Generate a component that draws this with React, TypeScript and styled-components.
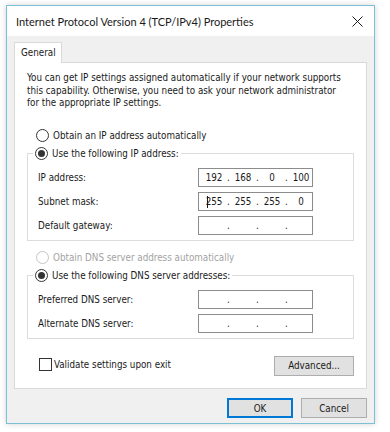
import React from "react";
import styled, { createGlobalStyle } from "styled-components";

const GlobalStyle = createGlobalStyle`
  html, body {
    margin: 0;
    padding: 0;
    background: #ffffff;
  }
  body {
    font-family: "DejaVu Sans Condensed", "DejaVu Sans", sans-serif;
    font-size: 9.75px;
    color: #1a1a1a;
  }
`;

const Page = styled.div`
  width: 390px;
  height: 432px;
  padding: 5px 0 0 6px;
  box-sizing: border-box;
`;

const Window = styled.div`
  width: 369px;
  height: 419px;
  box-sizing: border-box;
  border: 1px solid #7cc0d4;
  box-shadow: 0 0 6px rgba(0, 0, 0, 0.18);
  background: #f0f0f0;
  display: flex;
  flex-direction: column;
`;

const TitleBar = styled.div`
  height: 30px;
  background: #ffffff;
  display: flex;
  align-items: center;
  justify-content: space-between;
  padding: 0 8px 0 9px;
`;

const Title = styled.span`
  font-family: Lato, "Open Sans", sans-serif;
  font-size: 11px;
  color: #1a1a1a;
`;

const CloseButton = styled.button`
  border: none;
  background: transparent;
  padding: 0;
  width: 14px;
  height: 14px;
  display: flex;
  align-items: center;
  justify-content: center;
  margin-right: 2px;
`;

const Body = styled.div`
  flex: 1;
  display: flex;
  flex-direction: column;
  padding: 6px 7px 0 7px;
`;

const TabStrip = styled.div`
  display: flex;
  height: 20px;
`;

const Tab = styled.div`
  width: 48px;
  box-sizing: border-box;
  border: 1px solid #d9d9d9;
  border-bottom: none;
  background: #ffffff;
  padding: 4px 0 0 6px;
  margin-bottom: -1px;
  position: relative;
  z-index: 1;
`;

const Panel = styled.div`
  height: 327px;
  box-sizing: border-box;
  background: #ffffff;
  border: 1px solid #d9d9d9;
  padding: 9px 11px 0 12px;
  display: flex;
  flex-direction: column;
`;

const Intro = styled.p`
  margin: 0 0 17px 0;
  line-height: 12.5px;
`;

const Indent = styled.div<{ $top?: number }>`
  padding-left: 9px;
  margin-top: ${(p) => p.$top ?? 0}px;
`;

const RadioRow = styled.label<{ $disabled?: boolean }>`
  display: flex;
  align-items: center;
  gap: 4px;
  height: 18px;
  color: ${(p) => (p.$disabled ? "#a3a3a3" : "#1a1a1a")};
`;

const RadioCircle = styled.span<{ $checked?: boolean; $disabled?: boolean }>`
  width: 11px;
  height: 11px;
  border-radius: 50%;
  border: 1px solid ${(p) => (p.$disabled ? "#c4c4c4" : "#333333")};
  background: #ffffff;
  display: flex;
  align-items: center;
  justify-content: center;
  &::after {
    content: "";
    width: 7px;
    height: 7px;
    border-radius: 50%;
    background: ${(p) => (p.$checked ? "#333333" : "transparent")};
  }
`;

const Group = styled.fieldset`
  margin: 0 1px 0 0;
  border: 1px solid #dcdcdc;
  padding: 5px 0 5px 10px;
  display: flex;
  flex-direction: column;
  gap: 5px;
  min-width: 0;
`;

const Legend = styled.legend`
  padding: 0 2px 0 2px;
  margin-left: -5px;
`;

const FieldRow = styled.div`
  display: grid;
  grid-template-columns: 160px 115px;
  align-items: center;
`;

const AddressBox = styled.div`
  height: 19px;
  box-sizing: border-box;
  border: 1px solid #8c8c8c;
  display: grid;
  grid-template-columns: 26px 3px 26px 3px 26px 3px 26px;
  align-items: center;
  padding-left: 2px;
  position: relative;
`;

const Octet = styled.span`
  text-align: center;
`;

const Dot = styled.span`
  text-align: center;
`;

const Caret = styled.span`
  position: absolute;
  left: 8px;
  top: 3px;
  width: 1px;
  height: 12px;
  background: #1a1a1a;
`;

const BottomRow = styled.div`
  display: flex;
  align-items: center;
  justify-content: space-between;
  margin-top: 17px;
  padding: 0 1px 0 12px;
`;

const CheckRow = styled.label`
  display: flex;
  align-items: center;
  gap: 2px;
  margin-top: -3px;
`;

const CheckBox = styled.span`
  width: 11px;
  height: 11px;
  border: 1px solid #333333;
  background: #ffffff;
`;

const Button = styled.button<{ $default?: boolean; $width: number }>`
  font-family: inherit;
  font-size: 9.75px;
  color: #1a1a1a;
  background: #e1e1e1;
  border: 1px solid ${(p) => (p.$default ? "#0078d7" : "#adadad")};
  box-shadow: ${(p) => (p.$default ? "inset 0 0 0 1px #0078d7" : "none")};
  width: ${(p) => p.$width}px;
  height: 20px;
  padding: 0;
  box-sizing: border-box;
`;

const Footer = styled.div`
  display: flex;
  justify-content: flex-end;
  gap: 8px;
  padding-top: 9px;
`;

function Address({ value, caret }: { value?: string[]; caret?: boolean }) {
  const parts = value ?? ["", "", "", ""];
  return (
    <AddressBox>
      {caret && <Caret />}
      {parts.map((p, i) => (
        <React.Fragment key={i}>
          <Octet>{p}</Octet>
          {i < 3 && <Dot>.</Dot>}
        </React.Fragment>
      ))}
    </AddressBox>
  );
}

function Radio({ label, checked, disabled }: { label: string; checked?: boolean; disabled?: boolean }) {
  return (
    <RadioRow $disabled={disabled}>
      <RadioCircle $checked={checked} $disabled={disabled} />
      {label}
    </RadioRow>
  );
}

export default function App() {
  return (
    <>
      <GlobalStyle />
      <Page>
        <Window>
          <TitleBar>
            <Title>Internet Protocol Version 4 (TCP/IPv4) Properties</Title>
            <CloseButton aria-label="Close">
              <svg width="11" height="11" viewBox="0 0 11 11">
                <path d="M0.5 0.5 L10.5 10.5 M10.5 0.5 L0.5 10.5" stroke="#1a1a1a" strokeWidth="1" />
              </svg>
            </CloseButton>
          </TitleBar>
          <Body>
            <TabStrip>
              <Tab>General</Tab>
            </TabStrip>
            <Panel>
              <Intro>
                You can get IP settings assigned automatically if your network supports
                <br />
                this capability. Otherwise, you need to ask your network administrator
                <br />
                for the appropriate IP settings.
              </Intro>
              <Indent>
                <Radio label="Obtain an IP address automatically" />
              </Indent>
              <Group>
                <Legend>
                  <Radio label="Use the following IP address:" checked />
                </Legend>
                <FieldRow>
                  <span>IP address:</span>
                  <Address value={["192", "168", "0", "100"]} />
                </FieldRow>
                <FieldRow>
                  <span>Subnet mask:</span>
                  <Address value={["255", "255", "255", "0"]} caret />
                </FieldRow>
                <FieldRow>
                  <span>Default gateway:</span>
                  <Address />
                </FieldRow>
              </Group>
              <Indent $top={8}>
                <Radio label="Obtain DNS server address automatically" disabled />
              </Indent>
              <Group>
                <Legend>
                  <Radio label="Use the following DNS server addresses:" checked />
                </Legend>
                <FieldRow>
                  <span>Preferred DNS server:</span>
                  <Address />
                </FieldRow>
                <FieldRow>
                  <span>Alternate DNS server:</span>
                  <Address />
                </FieldRow>
              </Group>
              <BottomRow>
                <CheckRow>
                  <CheckBox />
                  Validate settings upon exit
                </CheckRow>
                <Button $width={80}>Advanced...</Button>
              </BottomRow>
            </Panel>
            <Footer>
              <Button $default $width={66}>OK</Button>
              <Button $width={66}>Cancel</Button>
            </Footer>
          </Body>
        </Window>
      </Page>
    </>
  );
}
